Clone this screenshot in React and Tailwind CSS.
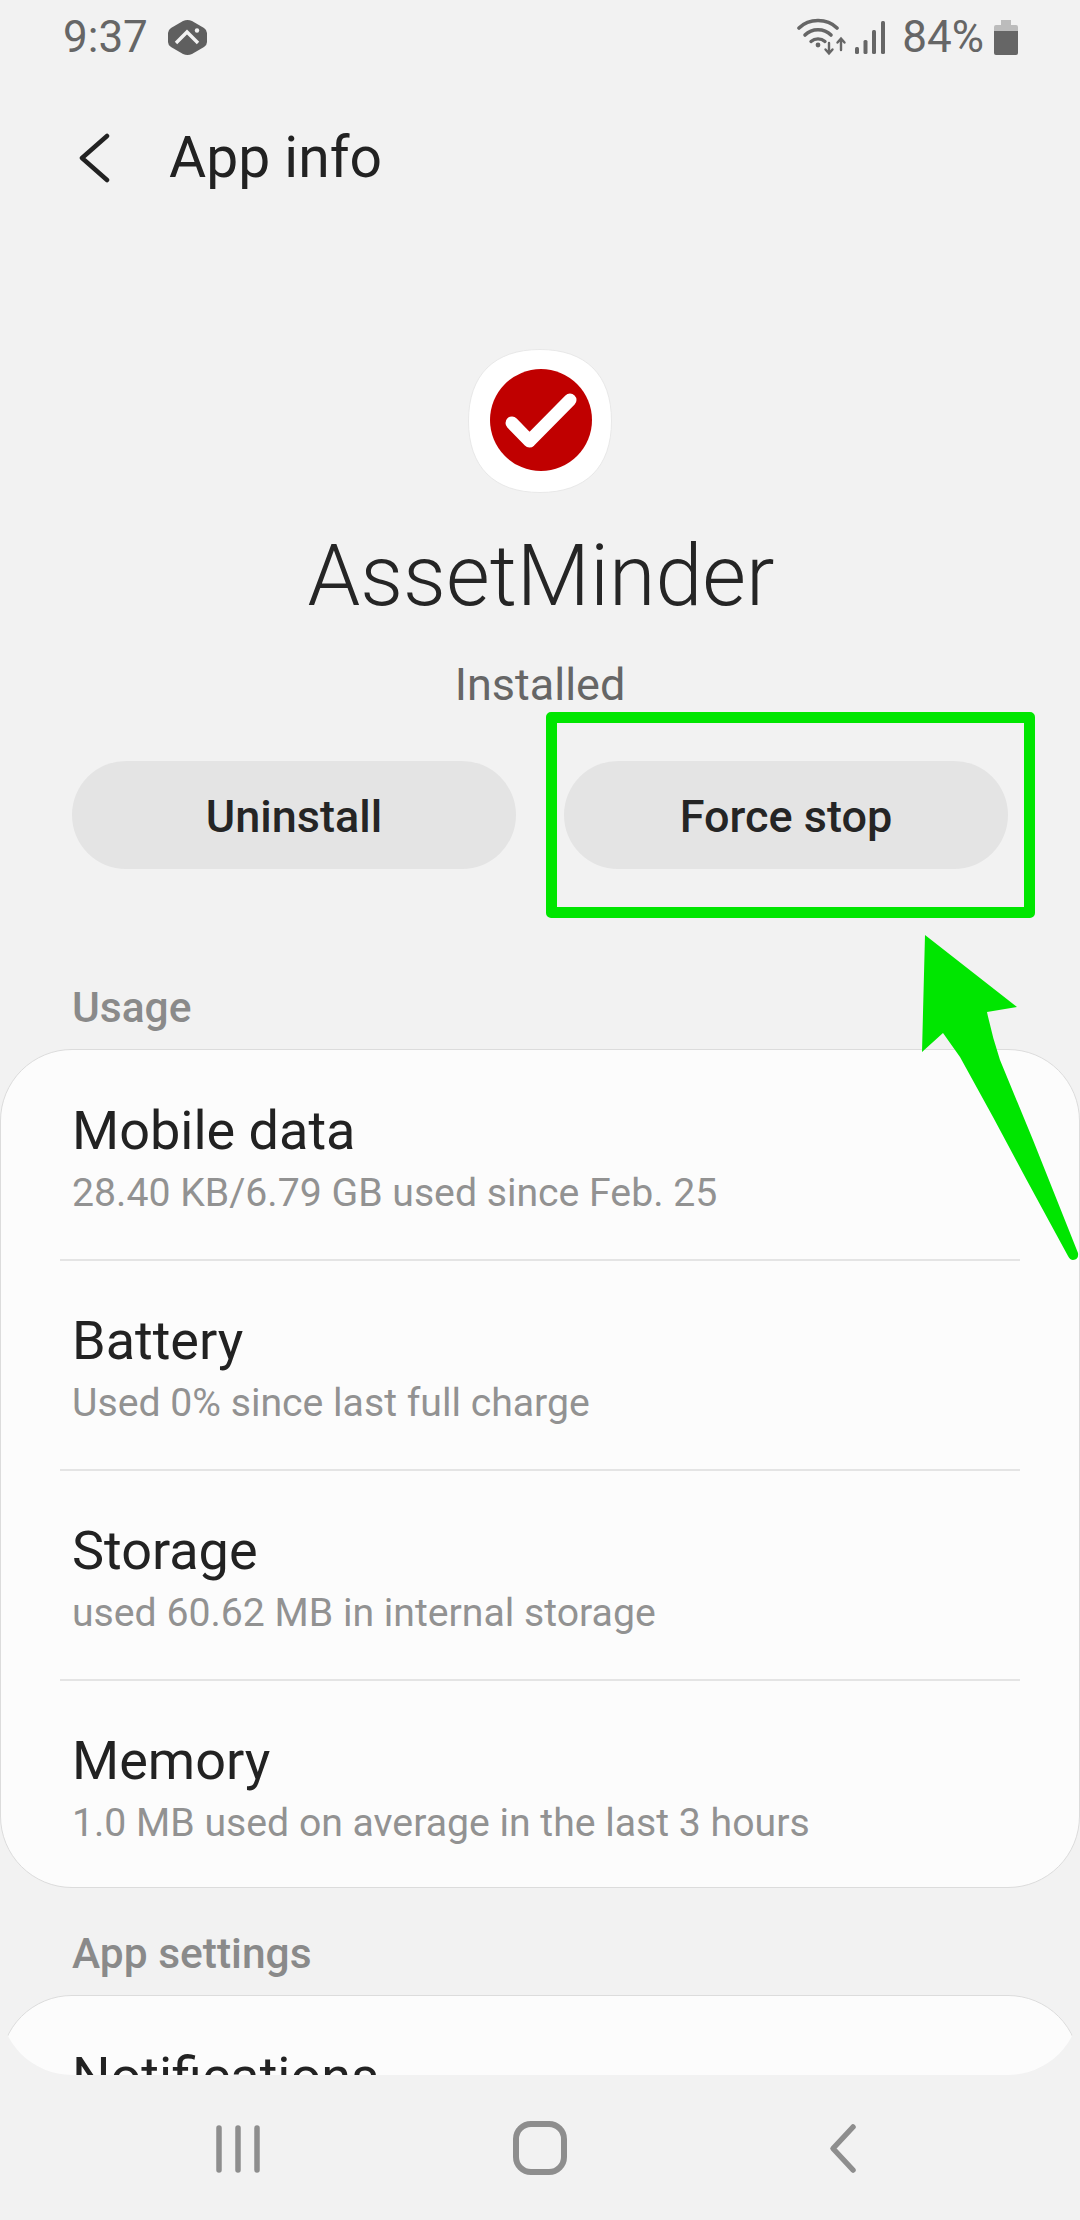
import React from 'react';

const rows = [
  { title: 'Mobile data', sub: '28.40 KB/6.79 GB used since Feb. 25' },
  { title: 'Battery', sub: 'Used 0% since last full charge' },
  { title: 'Storage', sub: 'used 60.62 MB in internal storage' },
  { title: 'Memory', sub: '1.0 MB used on average in the last 3 hours' },
];

const WifiIcon = () => (
  <svg width="50" height="38" viewBox="0 0 50 38" fill="none" stroke="#666" strokeLinecap="round">
    <path d="M2 10C12 0 30 0 40 10" strokeWidth="3.6" />
    <path d="M8 17C15 10 27 10 34 17" strokeWidth="3.6" />
    <path d="M14 23.5C18 20 24 20 28 23.5" strokeWidth="3.4" />
    <circle cx="21" cy="27" r="2.4" fill="#666" stroke="none" />
    <path d="M32 25V35M28.5 31.5L32 35.5L35.5 31.5" strokeWidth="2.4" />
    <path d="M44 32V21M40.5 24.5L44 20.5L47.5 24.5" strokeWidth="2.4" />
  </svg>
);

const SignalIcon = () => (
  <svg width="30" height="33" viewBox="0 0 30 33" fill="#666">
    <rect x="0" y="26" width="4" height="7" rx="1.5" />
    <rect x="8.5" y="19" width="4" height="14" rx="1.5" />
    <rect x="17" y="9" width="4" height="24" rx="1.5" />
    <rect x="26" y="0" width="4" height="33" rx="1.5" />
  </svg>
);

const BatteryIcon = () => (
  <svg width="24" height="35" viewBox="0 0 24 35">
    <path d="M7 0H17V5H22A2 2 0 0 1 24 7V11H0V7A2 2 0 0 1 2 5H7Z" fill="#bcbcbc" />
    <path d="M0 11H24V33A2 2 0 0 1 22 35H2A2 2 0 0 1 0 33Z" fill="#666" />
  </svg>
);

const HexIcon = () => (
  <svg width="39" height="35" viewBox="0 0 39 35">
    <path d="M15 1Q19.5 -1 24 1L36 8Q39 10 39 13V22Q39 25 36 27L24 34Q19.5 36 15 34L3 27Q0 25 0 22V13Q0 10 3 8Z" fill="#5f5f5f" />
    <path d="M8 23L19 12L30 23" fill="none" stroke="#f2f2f2" strokeWidth="3.4" />
    <circle cx="29" cy="10.5" r="2.2" fill="#f2f2f2" />
  </svg>
);

const AppIcon = () => (
  <svg width="144" height="144" viewBox="0 0 144 144">
    <path d="M72 .5C118 .5 143.5 26 143.5 72C143.5 118 118 143.5 72 143.5C26 143.5 .5 118 .5 72C.5 26 26 .5 72 .5Z" fill="#fff" stroke="#e8e8e8" />
    <g transform="translate(22 20)">
      <circle cx="51" cy="51" r="51" fill="#c00000" />
      <path d="M22 54L39.5 72L80 31" fill="none" stroke="#fff" strokeWidth="13" strokeLinecap="round" strokeLinejoin="round" />
    </g>
  </svg>
);

const NavBar = () => (
  <div className="flex-1 flex items-center pl-[198px] gap-[222px]">
    <svg width="80" height="54" viewBox="0 0 80 54" fill="none" stroke="#8e8e8e" strokeWidth="5.5" strokeLinecap="round">
      <path d="M21 7V49M40 7V49M59 7V49" />
    </svg>
    <svg width="80" height="54" viewBox="0 0 80 54" fill="none" stroke="#8e8e8e" strokeWidth="6">
      <rect x="16" y="3" width="48" height="48" rx="15" />
    </svg>
    <svg width="80" height="54" viewBox="0 0 80 54" fill="none" stroke="#8e8e8e" strokeWidth="5.5" strokeLinecap="round" strokeLinejoin="round">
      <path d="M51 6L31 27.5L51 49" />
    </svg>
  </div>
);

const App = () => {
  return (
    <div className="relative w-[1080px] h-[2220px] overflow-hidden bg-[#f2f2f2] flex flex-col font-['Roboto',sans-serif]">
      {/* status bar */}
      <div className="h-[74px] flex items-center justify-between pl-[63px] pr-[62px] text-[44px] text-[#666] shrink-0">
        <div className="flex items-center gap-[20px]">
          <span className="leading-[50px]">9:37</span>
          <HexIcon />
        </div>
        <div className="flex items-center">
          <WifiIcon />
          <div className="ml-[8px]"><SignalIcon /></div>
          <span className="ml-[17px] mr-[10px] leading-[50px]">84%</span>
          <BatteryIcon />
        </div>
      </div>

      {/* header */}
      <div className="h-[168px] flex items-center pl-[78px] shrink-0">
        <svg width="32" height="50" viewBox="0 0 32 50" fill="none" stroke="#222" strokeWidth="4.5" strokeLinecap="round" strokeLinejoin="round">
          <path d="M29 3L4 25L29 47" />
        </svg>
        <span className="ml-[59px] text-[57px] leading-[64px] text-[#222]">App info</span>
      </div>

      {/* app title block */}
      <div className="flex flex-col items-center mt-[107px]">
        <AppIcon />
        <div className="mt-[34px] ml-[2px] text-[84.5px] leading-[100px] font-light text-[#252525]">AssetMinder</div>
        <div className="mt-[30px] text-[45px] leading-[56px] text-[#666]">Installed</div>
      </div>

      <div className="mt-[48px] px-[72px] flex gap-[48px]">
        <button className="flex-1 h-[108px] pt-[4px] rounded-full bg-[#e4e4e4] text-[45px] font-medium text-[#252525]">Uninstall</button>
        <button className="flex-1 h-[108px] pt-[4px] rounded-full bg-[#e4e4e4] text-[45px] font-medium text-[#252525]">Force stop</button>
      </div>

      <div className="mt-[111px] px-[72px] text-[42.5px] leading-[56px] font-medium text-[#8a8a8a]">Usage</div>

      {/* usage card */}
      <div className="mt-[13px] bg-[#fcfcfc] border border-[#dcdcdc] rounded-[72px] shrink-0">
        {rows.map((row, i) => (
          <div key={row.title}>
            <div className={`px-[71px] ${i === 0 ? 'pt-[49px]' : 'pt-[48px]'} ${i === 3 ? 'pb-[39px]' : 'pb-[41px]'}`}>
              <div className="text-[54px] leading-[64px] text-[#222]">{row.title}</div>
              <div className="mt-[5px] text-[39.2px] leading-[50px] text-[#929292]">{row.sub}</div>
            </div>
            {i < 3 && <div className="mx-[59px] h-[2px] bg-[#e4e4e4]" />}
          </div>
        ))}
      </div>

      <div className="mt-[38px] px-[72px] text-[42.5px] leading-[56px] font-medium text-[#8a8a8a]">App settings</div>

      {/* settings card, cut off by the nav bar corners */}
      <div className="mt-[13px] h-[80px] rounded-b-[72px] overflow-hidden shrink-0">
        <div className="h-[200px] bg-[#fcfcfc] border border-[#dcdcdc] rounded-t-[72px] pl-[71px] pt-[49px]">
          <div className="text-[54px] leading-[64px] text-[#222]">Notifications</div>
        </div>
      </div>

      <NavBar />

      {/* green annotation */}
      <div className="absolute left-[546px] top-[712px] w-[489px] h-[206px] border-[11px] border-[#00e600] rounded-[5px]" />
      <svg className="absolute left-[900px] top-[920px]" width="180" height="350" viewBox="900 920 180 350">
        <path
          d="M925 935L1017 1007L987 1012Q992 1036 1000 1060L1033 1140L1078 1253Q1079 1260 1073 1260Q1070 1260 1068 1256L1026.7 1180L993 1117L960 1057L943 1033L922 1052Z"
          fill="#00e600"
        />
      </svg>
    </div>
  );
};

export default App;
